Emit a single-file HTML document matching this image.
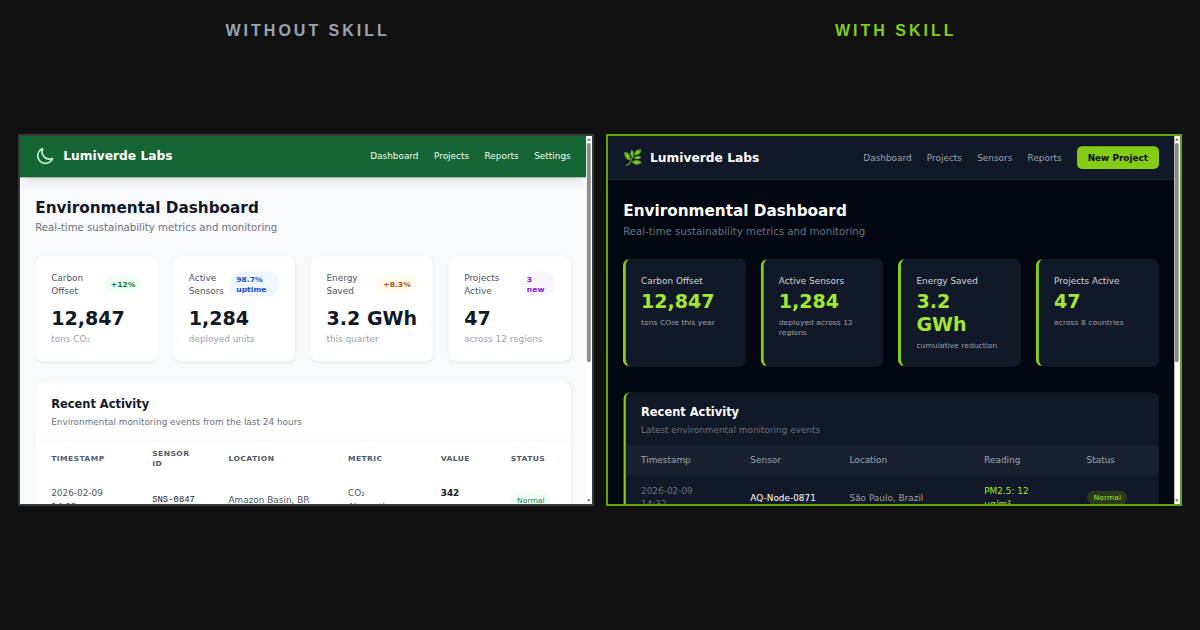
<!DOCTYPE html>
<html lang="en">
<head>
<meta charset="utf-8">
<title>Without skill vs with skill</title>
<style>
*{box-sizing:border-box;margin:0;padding:0}
html,body{width:1200px;height:630px;overflow:hidden;background:#111111}
body{position:relative;font-family:"Liberation Sans",sans-serif}
.lbl{position:absolute;top:21px;height:20px;line-height:20px;font-size:16px;font-weight:700;letter-spacing:3px;white-space:nowrap}
.lbl.l{left:225.5px;color:#9ca3af}
.lbl.r{left:835px;color:#84cc16}
.panel{position:absolute;top:134px;width:576px;height:372px;border:2px solid #3a3a3a;overflow:hidden}
.panel.l{left:18px;background:#f9fafb}
.panel.r{left:606px;border-color:#65a30d;background:#030712}
.vp{position:absolute;left:0;top:0;width:900px;height:579px;transform:scale(0.635556);transform-origin:0 0;font-family:"DejaVu Sans","Liberation Sans",sans-serif;overflow:hidden}
.page{position:absolute;left:0;top:0;width:890.5px;height:579px;overflow:hidden}
.sb{position:absolute;right:0;top:0;width:9.5px;height:579px;background:#fff}
.sb .th{position:absolute;left:1.9px;width:5.8px;top:10.6px;height:345.5px;background:#8c8c8c;border-radius:3px}
.sb .up,.sb .dn{position:absolute;left:1.75px;width:0;height:0;border-left:3px solid transparent;border-right:3px solid transparent}
.sb .up{top:4px;border-bottom:3px solid #505050}
.sb .dn{bottom:4px;border-top:3px solid #505050}

/* ---------- left (plain) ---------- */
.A{background:#f9fafb;color:#111827}
.A .nav{height:64.5px;background:#166534;display:flex;align-items:center;justify-content:space-between;padding:0 24px;box-shadow:0 10px 15px -3px rgba(0,0,0,.1),0 4px 6px -4px rgba(0,0,0,.08);position:relative;z-index:2}
.A .brand{display:flex;align-items:center;gap:12px;color:#fff;font-weight:700;font-size:19.3px}
.A .brand svg{width:32px;height:32px;display:block;position:relative;top:-1.5px}
.A .brand span{position:relative;top:-1px}
.A .links{display:flex;gap:24.4px;font-size:14px;color:#f0fdf4;position:relative;top:-1px}
.A main{padding:32.5px 24px 0}
.A h1{position:relative;top:-1px;font-size:24px;line-height:34px;font-weight:700;color:#111827}
.A .sub{font-size:16px;line-height:24px;color:#6b7280;margin-top:2px}
.A .cards{display:grid;grid-template-columns:repeat(4,1fr);gap:24px;margin-top:32px}
.A .card{background:#fff;border:1px solid #fff;border-radius:12px;box-shadow:0 1px 3px rgba(0,0,0,.06);padding:24px;height:166px}
.A .card .top{display:flex;justify-content:space-between;align-items:center;height:42px;margin-top:-1px}
.A .card .k{font-size:14px;line-height:21px;color:#4b5563}
.A .badge{font-size:12px;line-height:16px;font-weight:700;border-radius:20px;padding:4px 10px;position:relative;top:-1px}
.A .b2{width:78px}.A .b4{width:54px}
.A .b1{background:#f0fdf4;color:#15803d}
.A .b2{background:#eff6ff;color:#1d4ed8}
.A .b3{background:#fffbeb;color:#b45309}
.A .b4{background:#faf5ff;color:#7e22ce}
.A .v{font-size:30px;line-height:36px;font-weight:700;color:#111827;margin-top:15px;white-space:nowrap}
.A .u{font-size:14px;line-height:20px;color:#9ca3af;margin-top:3px}
.A .act{background:#fff;border:1px solid #fff;border-radius:12px;box-shadow:0 1px 3px rgba(0,0,0,.06);margin-top:31px;height:300px}
.A .act .hd{padding:21px 24px 0;height:92px;border-bottom:1px solid #f3f4f6}
.A .act h2{font-size:18px;line-height:28px;font-weight:700;color:#111827}
.A .act p{font-size:14px;line-height:20px;color:#6b7280;margin-top:2.5px}
.A table{border-collapse:collapse;width:100%;table-layout:fixed}
.A th{font-size:12px;line-height:16px;font-weight:700;letter-spacing:.6px;color:#525b6a;text-align:left;padding:12px 24px;height:56px;vertical-align:middle;text-transform:uppercase}
.A tr+tr td{padding-top:16.5px;line-height:21px}
.A td{font-size:14px;line-height:20px;color:#4b5563;padding:16px 24px;vertical-align:middle}

/* ---------- right (skill) ---------- */
.B{background:#030712;color:#f9fafb}
.B .nav{position:relative;height:69px;background:#111827;border-bottom:1px solid #22351f;display:flex;align-items:center;justify-content:space-between;padding:0 24px}
.B .brand{display:flex;align-items:center;gap:12px;color:#fff;font-weight:700;font-size:19.3px}
.B .brand svg{width:47.2px;height:47.2px;display:block;position:absolute;left:15.7px;top:9.4px}
.B .brand span{margin-left:42px}
.B .links{display:flex;gap:24px;align-items:center;font-size:14px;color:#9ca3af}
.B .btn{background:#84cc16;color:#0a0a0a;font-weight:700;font-size:14px;padding:9px 16.75px;border-radius:8px;line-height:18px}
.B main{padding:32px 24px 0}
.B h1{position:relative;top:-1.5px;font-size:24px;line-height:36px;font-weight:700;color:#fff}
.B .sub{font-size:16px;line-height:24px;color:#6b7280;margin-top:0.5px;margin-bottom:0.5px}
.B .cards{display:grid;grid-template-columns:repeat(4,1fr);gap:24px;margin-top:31px}
.B .card{background:#111827;border-radius:12px;border:1px solid #182132;border-left:5px solid #84cc16;margin-left:-1px;padding:24px 23px 23px 24px;height:170px}
.B .k{font-size:14px;line-height:20px;color:#d1d5db}
.B .v{font-size:30px;line-height:36px;font-weight:700;color:#a3e635;margin-top:5px}
.B .u{font-size:12px;line-height:16px;color:#9ca3af;margin-top:6.6px}
.B .act{background:#111827;border-radius:12px;border-left:4px solid #84cc16;margin-top:40px;height:300px;overflow:hidden}
.B .act .hd{padding:18px 24px 0;height:84px}
.B .act h2{font-size:18px;line-height:28px;font-weight:700;color:#fff}
.B .act p{font-size:14px;line-height:20px;color:#6b7280;margin-top:3px}
.B .row{display:flex;align-items:center;font-size:14px;line-height:20px;color:#9ca3af}
.B .row>div{padding:0 24px;flex:none}
.B .row.h{background:#1a2232;height:46px;padding-top:1px}
.B .row.d{height:72px;margin-top:0;color:#9ca3af}
.B .c1{width:172px}.B .c2{width:156px}.B .c3{width:212px}.B .c4{width:161px}.B .c5{width:140px}
</style>
</head>
<body>
<div class="lbl l">WITHOUT SKILL</div>
<div class="lbl r">WITH SKILL</div>

<div class="panel l"><div class="vp A">
 <div class="page">
  <div class="nav">
   <div class="brand"><svg viewBox="0 0 24 24" fill="none" stroke="#bbf7d0" stroke-width="2" stroke-linecap="round" stroke-linejoin="round"><path d="M20.354 15.354A9 9 0 0 1 8.646 3.646 9.003 9.003 0 0 0 12 21a9.003 9.003 0 0 0 8.354-5.646z"/></svg><span>Lumiverde Labs</span></div>
   <div class="links"><span>Dashboard</span><span>Projects</span><span>Reports</span><span>Settings</span></div>
  </div>
  <main>
   <h1>Environmental Dashboard</h1>
   <div class="sub">Real-time sustainability metrics and monitoring</div>
   <div class="cards">
    <div class="card"><div class="top"><div class="k">Carbon<br>Offset</div><div class="badge b1">+12%</div></div><div class="v">12,847</div><div class="u">tons CO₂</div></div>
    <div class="card"><div class="top"><div class="k">Active<br>Sensors</div><div class="badge b2">98.7%<br>uptime</div></div><div class="v">1,284</div><div class="u">deployed units</div></div>
    <div class="card"><div class="top"><div class="k">Energy<br>Saved</div><div class="badge b3">+8.3%</div></div><div class="v">3.2 GWh</div><div class="u">this quarter</div></div>
    <div class="card"><div class="top"><div class="k">Projects<br>Active</div><div class="badge b4">3<br>new</div></div><div class="v">47</div><div class="u">across 12 regions</div></div>
   </div>
   <div class="act">
    <div class="hd"><h2>Recent Activity</h2><p>Environmental monitoring events from the last 24 hours</p></div>
    <table>
     <colgroup><col style="width:159px"><col style="width:120px"><col style="width:188px"><col style="width:146px"><col style="width:110px"><col></colgroup>
     <tr><th>Timestamp</th><th>Sensor<br>ID</th><th>Location</th><th>Metric</th><th>Value</th><th>Status</th></tr>
     <tr><td>2026-02-09<br>14:32</td><td style="font-family:'Liberation Mono','DejaVu Sans Mono',monospace;color:#111827">SNS-0847</td><td>Amazon Basin, BR</td><td>CO₂<br>Absorption</td><td style="color:#111827;font-weight:700">342<br>ppm</td><td><span style="display:inline-block;font-size:12px;line-height:16px;color:#15803d;background:#f0fdf4;border-radius:11px;padding:3px 10px">Normal</span></td></tr>
    </table>
   </div>
  </main>
 </div>
 <div class="sb"><div class="up"></div><div class="th"></div><div class="dn"></div></div>
</div></div>

<div class="panel r"><div class="vp B">
 <div class="page">
  <div class="nav">
   <div class="brand"><svg viewBox="0 0 630 630"><defs><radialGradient id="lf" cx="0.5" cy="0.5" r="0.6"><stop offset="0" stop-color="#88cb2b"/><stop offset="1" stop-color="#589622"/></radialGradient></defs><g transform="translate(0 8)"><path d="M172 488C222 470 262 440 268 395C272 350 292 318 328 290" fill="none" stroke="#65a528" stroke-width="26" stroke-linecap="round"/><g fill="url(#lf)" stroke="#0b1510" stroke-width="6" paint-order="stroke"><path d="M128 208C205 195 268 270 264 384C185 385 118 305 128 208Z"/><path d="M285 160C335 200 335 275 302 320C250 295 235 215 285 160Z"/><path d="M487 143C490 228 420 288 333 277C328 200 397 144 487 143Z"/><path d="M492 312C455 368 378 372 328 341C357 288 442 278 492 312Z"/><path d="M492 430C445 488 335 495 288 424C328 362 436 362 492 430Z"/></g></g></svg><span>Lumiverde Labs</span></div>
   <div class="links"><span>Dashboard</span><span>Projects</span><span>Sensors</span><span>Reports</span><span class="btn">New Project</span></div>
  </div>
  <main>
   <h1>Environmental Dashboard</h1>
   <div class="sub">Real-time sustainability metrics and monitoring</div>
   <div class="cards">
    <div class="card"><div class="k">Carbon Offset</div><div class="v">12,847</div><div class="u">tons CO₂e this year</div></div>
    <div class="card"><div class="k">Active Sensors</div><div class="v">1,284</div><div class="u">deployed across 12 regions</div></div>
    <div class="card"><div class="k">Energy Saved</div><div class="v">3.2<br>GWh</div><div class="u">cumulative reduction</div></div>
    <div class="card"><div class="k">Projects Active</div><div class="v">47</div><div class="u">across 8 countries</div></div>
   </div>
   <div class="act">
    <div class="hd"><h2>Recent Activity</h2><p>Latest environmental monitoring events</p></div>
    <div class="row h"><div class="c1">Timestamp</div><div class="c2">Sensor</div><div class="c3">Location</div><div class="c4">Reading</div><div class="c5">Status</div></div>
    <div class="row d"><div class="c1" style="color:#6b7280">2026-02-09<br>14:32</div><div class="c2" style="color:#fff">AQ-Node-0871</div><div class="c3">São Paulo, Brazil</div><div class="c4" style="color:#a3e635">PM2.5: 12<br>μg/m³</div><div class="c5"><span style="display:inline-block;font-size:12px;line-height:16px;color:#a3e635;background:#2a3a1c;border-radius:11px;padding:3px 10px;margin-left:1px">Normal</span></div></div>
   </div>
  </main>
 </div>
 <div class="sb"><div class="up"></div><div class="th"></div><div class="dn"></div></div>
</div></div>
</body>
</html>
